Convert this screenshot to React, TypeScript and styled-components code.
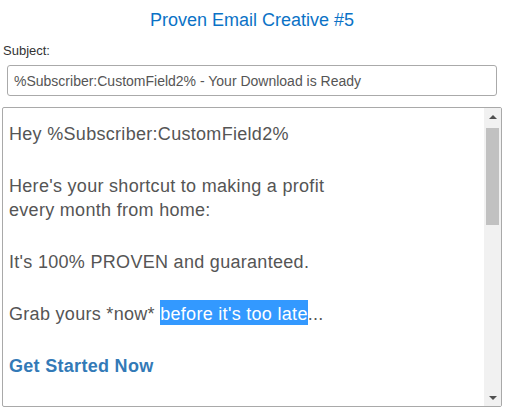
import styled, { createGlobalStyle } from 'styled-components';

const GlobalStyle = createGlobalStyle`
  body {
    margin: 0;
    background: #fff;
    font-family: "Liberation Sans", Arial, sans-serif;
  }
`;

const Wrapper = styled.div`
  width: 500px;
  margin-left: 2px;
`;

const Title = styled.h2`
  margin: 10px 0 0;
  font-size: 18px;
  line-height: 20px;
  font-weight: normal;
  text-align: center;
  color: #0b72c6;
`;

const Label = styled.div`
  margin-top: 13px;
  margin-left: 1px;
  font-size: 13px;
  line-height: 15px;
  color: #333;
`;

const SubjectInput = styled.div`
  margin: 7px 5px 0;
  height: 31px;
  box-sizing: border-box;
  border: 1px solid #aaa;
  border-radius: 3px;
  padding: 0 6px;
  display: flex;
  align-items: center;
  font-size: 14px;
  color: #555;
`;

const Editor = styled.div`
  margin-top: 11px;
  height: 300px;
  box-sizing: border-box;
  border: 1px solid #a9a9a9;
  border-radius: 2px;
  display: flex;
  overflow: hidden;
`;

const Content = styled.div`
  flex: 1;
  padding: 14px 6px 0;
  overflow: hidden;
  font-size: 18px;
  line-height: 24px;
  letter-spacing: 0.3px;
  color: #555;
`;

const Para = styled.p<{ $link?: boolean }>`
  margin: 0 0 28px;
  white-space: nowrap;
  font-weight: ${(p) => (p.$link ? 'bold' : 'normal')};
  color: ${(p) => (p.$link ? '#337ab7' : 'inherit')};
`;

const Selected = styled.span`
  background: #3399ff;
  color: #fff;
  padding: 4px 0 1px;
`;

const Scrollbar = styled.div`
  width: 17px;
  background: #f1f1f1;
  display: flex;
  flex-direction: column;
`;

const ArrowButton = styled.div<{ $down?: boolean }>`
  height: 17px;
  display: flex;
  align-items: center;
  justify-content: center;
  &::before {
    content: '';
    width: 0;
    height: 0;
    border-left: 4px solid transparent;
    border-right: 4px solid transparent;
    ${(p) =>
      p.$down
        ? 'border-top: 4px solid #505050;'
        : 'border-bottom: 4px solid #505050;'}
  }
`;

const Track = styled.div`
  flex: 1;
  padding: 3px 2px 0;
`;

const Thumb = styled.div`
  height: 97px;
  background: #c1c1c1;
`;

export default function App() {
  return (
    <>
      <GlobalStyle />
      <Wrapper>
        <Title>Proven Email Creative #5</Title>
        <Label>Subject:</Label>
        <SubjectInput>%Subscriber:CustomField2% - Your Download is Ready</SubjectInput>
        <Editor>
          <Content>
            <Para>Hey %Subscriber:CustomField2%</Para>
            <Para>
              Here's your shortcut to making a profit
              <br />
              every month from home:
            </Para>
            <Para>It's 100% PROVEN and guaranteed.</Para>
            <Para>
              Grab yours *now* <Selected>before it's too late</Selected>...
            </Para>
            <Para $link>Get Started Now</Para>
          </Content>
          <Scrollbar>
            <ArrowButton />
            <Track>
              <Thumb />
            </Track>
            <ArrowButton $down />
          </Scrollbar>
        </Editor>
      </Wrapper>
    </>
  );
}
